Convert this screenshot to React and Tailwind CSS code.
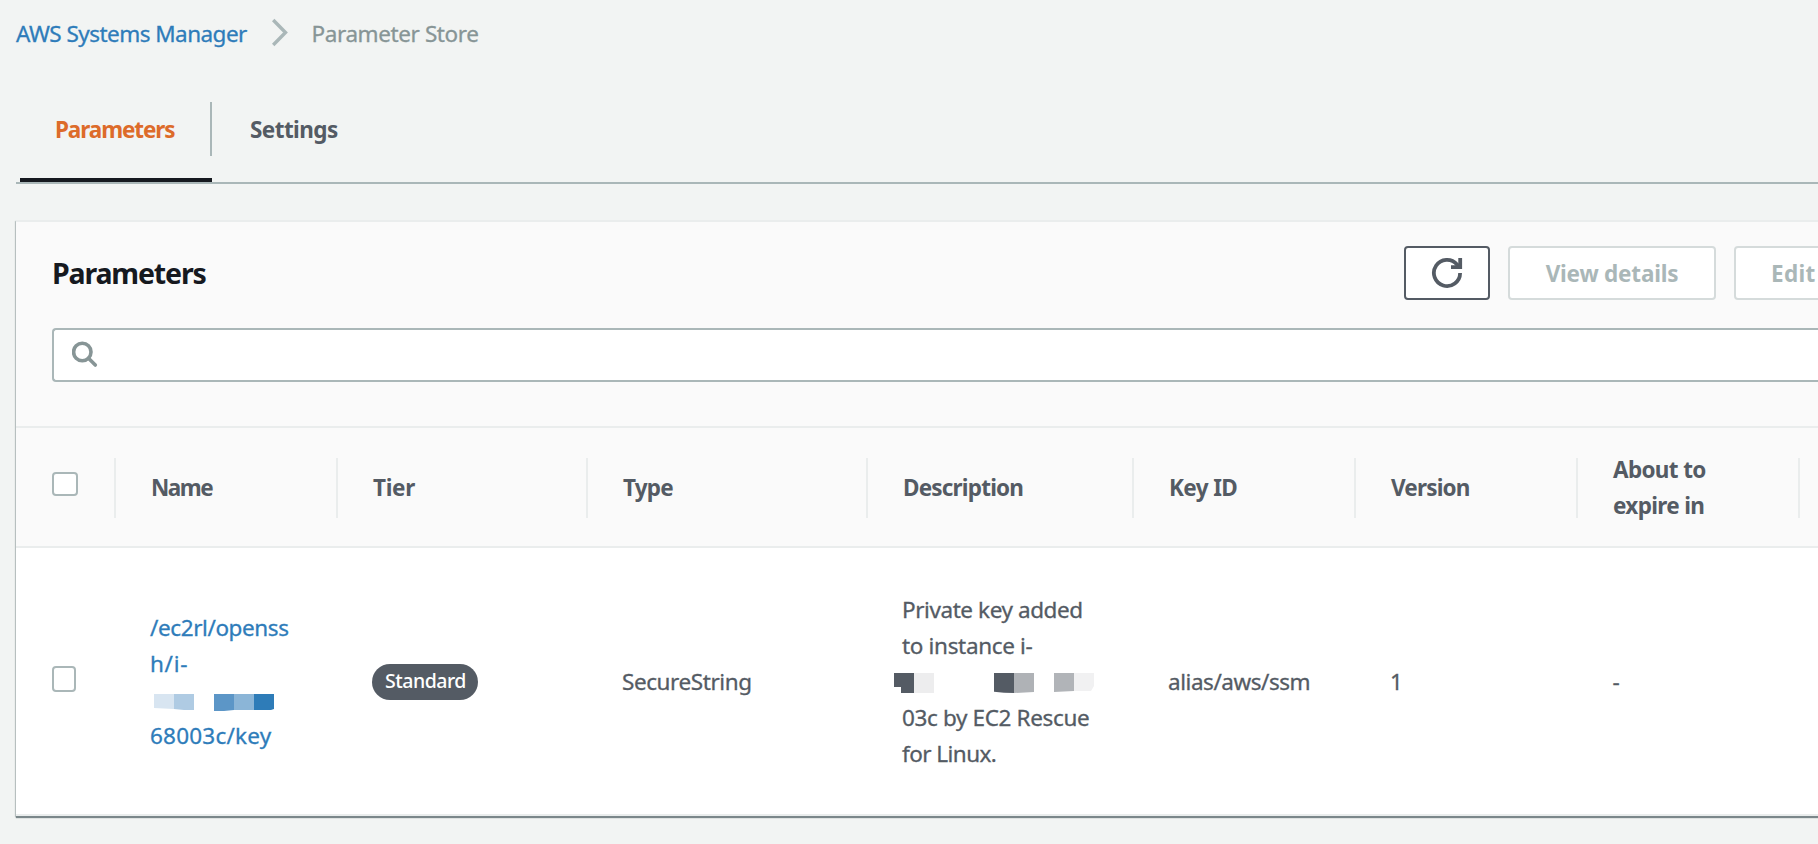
const COLUMNS = [
  { label: ["Name"], tracking: "tracking-[-1.5px]" },
  { label: ["Tier"], tracking: "tracking-[-0.3px]" },
  { label: ["Type"], tracking: "tracking-[-0.8px]" },
  { label: ["Description"], tracking: "tracking-[-0.8px]" },
  { label: ["Key ID"], tracking: "tracking-[-0.6px]" },
  { label: ["Version"], tracking: "tracking-[-0.82px]" },
  { label: ["About to", "expire in"], tracking: "tracking-[-0.66px]" },
  { label: [""], tracking: "tracking-normal" },
];

const GRID =
  "grid grid-cols-[100px_222px_250px_280px_266px_222px_222px_222px_18px]";

function Breadcrumb() {
  return (
    <nav className="flex h-[68px] items-center pl-4 leading-9 [-webkit-text-stroke:0.3px]">
      <a className="w-[256px] tracking-[-0.54px] whitespace-nowrap text-[#2e7cba]">
        AWS Systems Manager
      </a>
      <svg width="17" height="30" viewBox="0 0 17 30" className="-mt-0.5 shrink-0">
        <path d="M1.2 2 L13.5 14.5 L1.2 27" fill="none" stroke="#aab7b8" strokeWidth="3.4" />
      </svg>
      <span className="ml-[22.5px] tracking-[-0.4px] whitespace-nowrap text-[#879596]">
        Parameter Store
      </span>
    </nav>
  );
}

function Tabs() {
  return (
    <div className="ml-4 flex h-[116px] items-end border-b-2 border-[#aab7b8] pl-1 font-bold">
      <div className="flex h-[80px] w-[192px] flex-col justify-between border-b-4 border-[#16191f]">
        <div className="flex h-[54px] items-center border-r-2 border-[#aab7b8] pt-0.5 pl-[35px] tracking-[-1.1px] text-[#dd6b2a]">
          Parameters
        </div>
      </div>
      <div className="flex h-[80px] pl-[38px]">
        <div className="flex h-[54px] items-center pt-0.5 tracking-[-0.56px] text-[#545b64]">Settings</div>
      </div>
    </div>
  );
}

function Toolbar() {
  return (
    <div className="flex h-[54px] items-center justify-between pl-9">
      <h2 className="pt-px text-[28.5px] font-bold tracking-[-1.16px] text-[#16191f]">Parameters</h2>
      <div className="flex w-[414px] shrink-0 gap-[18px] overflow-hidden font-bold text-[#aab7b8]">
        <button className="flex h-[54px] w-[86px] shrink-0 items-center justify-center rounded-[4px] border-2 border-[#545b64] bg-white">
          <svg width="32" height="32" viewBox="0 0 32 32" fill="none" stroke="#545b64" strokeWidth="3.8">
            <path d="M29.1 16 A13.1 13.1 0 1 1 26 7.5 L28 10" />
            <path d="M29.2 1 V10.2 H20" />
          </svg>
        </button>
        <button className="h-[54px] w-[208px] shrink-0 rounded-[4px] border-2 border-[#d5dbdb] bg-white pt-0.5 tracking-[-0.2px]">
          View details
        </button>
        <button className="h-[54px] w-[116px] shrink-0 rounded-[4px] border-2 border-[#d5dbdb] bg-white pt-0.5 pl-[35px] text-left tracking-[0.3px]">
          Edit
        </button>
      </div>
    </div>
  );
}

function SearchField() {
  return (
    <div className="mt-7 ml-9 flex h-[54px] items-center rounded-l-[4px] border-2 border-r-0 border-[#aab7b8] bg-white pl-[18px]">
      <svg width="27" height="27" viewBox="0 0 27 27" fill="none" stroke="#879596" strokeWidth="3.6" className="-mt-0.5">
        <circle cx="10.3" cy="11" r="8.7" />
        <path d="M16.5 17.2 L23.3 24" strokeLinecap="round" />
      </svg>
    </div>
  );
}

function TableHeader() {
  return (
    <div className={`${GRID} mt-11 h-[122px] items-center border-y-2 border-[#eaeded] pt-0.5 leading-9 font-bold text-[#545b64]`}>
      <div className="flex h-[60px] w-[100px] items-start border-r-2 border-[#eaeded] pt-3.5 pl-9">
        <div className="h-6 w-[26px] rounded-[4px] border-2 border-[#aab7b8] bg-white" />
      </div>
      {COLUMNS.map((c, i) => (
        <div
          key={i}
          className={`flex h-[60px] flex-col justify-center border-r-2 border-[#eaeded] pl-[35px] whitespace-nowrap ${c.tracking}`}
        >
          {c.label.map((line) => (
            <span key={line}>{line}</span>
          ))}
        </div>
      ))}
    </div>
  );
}

function RedactedName() {
  return (
    <svg width="140" height="36" viewBox="0 0 140 36" className="block">
      <path d="M4 12 h20 v15 l-20 -1 z" fill="#d8e5f1" />
      <path d="M24 12 h20 v16 h-10 l-10 -1 z" fill="#afcbe3" />
      <path d="M64 12 h20 v16 l-10 1 h-10 z" fill="#5c96c7" />
      <path d="M84 12 h20 v16 h-20 z" fill="#8bb5d7" />
      <path d="M104 12 h20 v15 l-3 1 h-17 z" fill="#2e7cb8" />
    </svg>
  );
}

function RedactedId() {
  return (
    <svg width="206" height="36" viewBox="0 0 206 36" className="-ml-2 block">
      <path d="M0 9 h20 v20 h-13 v-6 h-7 z" fill="#545b64" />
      <path d="M20 9 h20 v20 h-20 z" fill="#ededee" />
      <path d="M100 9 h20 v20 l-10 -.3 l-10 -1 z" fill="#545b64" />
      <path d="M120 9 h20 v19 l-20 1 z" fill="#afb2b6" />
      <path d="M160 9 h20 v18 l-20 1 z" fill="#b1b4b8" />
      <path d="M180 9 h20 v13 l-3 5 h-17 z" fill="#f1f1f2" />
    </svg>
  );
}

function TableRow() {
  return (
    <div className={`${GRID} h-[268px] items-center border-b-2 border-[#eaeded] bg-white pt-0.5 leading-9 whitespace-nowrap text-[#545b64] [-webkit-text-stroke:0.3px]`}>
      <div className="pl-9">
        <div className="-mt-1.5 h-[26px] w-6 rounded-[4px] border-2 border-[#aab7b8] bg-white" />
      </div>
      <a className="flex flex-col pl-[34px] text-[#2e7cba]">
        <span className="tracking-[-0.4px]">/ec2rl/openss</span>
        <span className="tracking-[0.7px]">h/i-</span>
        <RedactedName />
        <span className="tracking-[0.22px]">68003c/key</span>
      </a>
      <div className="pl-[34px]">
        <div className="flex h-9 w-[106px] items-center justify-center rounded-full bg-[#545b64] pl-px text-[19.5px] font-medium tracking-[-0.5px] text-white [-webkit-text-stroke:0]">
          <span className="-mt-0.5">Standard</span>
        </div>
      </div>
      <div className="pl-[34px] tracking-[-0.42px]">SecureString</div>
      <div className="flex flex-col pl-[34px]">
        <span className="tracking-[-0.42px]">Private key added</span>
        <span className="tracking-[-0.33px]">to instance i-</span>
        <RedactedId />
        <span className="tracking-[-0.36px]">03c by EC2 Rescue</span>
        <span className="tracking-[-0.55px]">for Linux.</span>
      </div>
      <div className="pl-[34px] tracking-[-0.45px]">alias/aws/ssm</div>
      <div className="pl-[34px]">1</div>
      <div className="pl-[34.5px]">-</div>
    </div>
  );
}

export default function App() {
  return (
    <div className="h-[844px] w-[1818px] overflow-hidden bg-[#f2f4f3] font-['Noto_Sans',sans-serif] text-[22.5px]">
      <Breadcrumb />
      <Tabs />
      <section className="mt-9 ml-4 border-t-2 border-[#eaeded] bg-[#fafafa] pt-6 shadow-[0_2px_1px_0_#7b878a,-1px_1px_1px_0_#c3caca]">
        <Toolbar />
        <SearchField />
        <TableHeader />
        <TableRow />
      </section>
    </div>
  );
}
